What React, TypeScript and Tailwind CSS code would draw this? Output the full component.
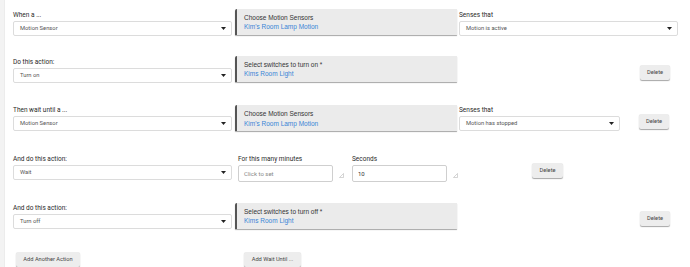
import React from "react";

const roboto = { fontFamily: "Roboto, 'Liberation Sans', sans-serif" };
const arial = { fontFamily: "'Liberation Sans', Arial, sans-serif" };

function Caret() {
  return (
    <svg width="5" height="3" viewBox="0 0 5 3" className="shrink-0">
      <path d="M0 0 L5 0 L2.5 3 Z" fill="#222" />
    </svg>
  );
}

function Select({ value, width = "w-[219px]" }: { value: string; width?: string }) {
  return (
    <div
      className={`${width} h-[15px] bg-white border border-[#dcdcdc] rounded-[2px] flex items-center justify-between pl-[6px] pr-[5px] text-[5.8px] text-[#555]`}
    >
      <span>{value}</span>
      <Caret />
    </div>
  );
}

function Field({ label, value, width }: { label: string; value: string; width?: string }) {
  return (
    <div className="flex flex-col">
      <span className="text-[6.5px] leading-[8px] text-[#2a2a2a] mb-[2px]">{label}</span>
      <Select value={value} width={width} />
    </div>
  );
}

function DeviceBox({ title, device }: { title: string; device: string }) {
  return (
    <div
      style={arial}
      className="w-[222px] h-[26px] bg-[#ebebeb] border-l-2 border-[#555] rounded-tl-[2px] shadow-[0_1px_1px_rgba(0,0,0,0.35)] pl-[7px] pt-[4px] flex flex-col text-[6.5px] leading-[9.5px]"
    >
      <span className="text-[#333]">{title}</span>
      <span className="text-[#3a85d6]">{device}</span>
    </div>
  );
}

function Btn({ children, className = "" }: { children: React.ReactNode; className?: string }) {
  return (
    <div
      className={`h-[15px] bg-[#ededed] rounded-[2px] shadow-[0_1px_1px_rgba(0,0,0,0.35)] flex items-center justify-center text-[5.7px] text-[#444] ${className}`}
    >
      {children}
    </div>
  );
}

function Resize() {
  return (
    <svg width="5" height="5" viewBox="0 0 5 5" className="shrink-0">
      <path d="M0.5 4.5 L4.5 0.5 M0.5 4.5 L4.5 4.5 M4.5 0.5 L4.5 4.5" stroke="#aaa" strokeWidth="0.5" fill="none" />
    </svg>
  );
}

function NumInput({ label, value, muted }: { label: string; value: string; muted?: boolean }) {
  return (
    <div className="flex flex-col">
      <span className="text-[6.5px] leading-[8px] text-[#2a2a2a] mb-[2px]">{label}</span>
      <div className="flex items-end">
        <div
          className={`w-[95px] h-[17px] border border-[#cfcfcf] rounded-[2px] bg-white flex items-center pl-[5px] text-[6px] ${muted ? "text-[#888]" : "text-[#333]"}`}
        >
          {value}
        </div>
        <div className="ml-[6px] mb-[4px]">
          <Resize />
        </div>
      </div>
    </div>
  );
}

export default function App() {
  return (
    <div style={roboto} className="w-[690px] h-[267px] bg-white flex overflow-hidden">
      <div className="w-[5px] h-full bg-[#f3f3f3] border-r border-[#ececec]" />
      <div className="flex-1 pl-[8px] flex flex-col">
        <div className="h-[36px] flex items-end">
          <Field label="When a ..." value="Motion Sensor" />
          <div className="ml-[3px] mb-[1px]">
            <DeviceBox title="Choose Motion Sensors" device="Kim's Room Lamp Motion" />
          </div>
          <div className="ml-[2px]">
            <Field label="Senses that" value="Motion is active" />
          </div>
        </div>

        <div className="h-[48px] flex items-end">
          <Field label="Do this action:" value="Turn on" />
          <div className="ml-[3px] mb-[1px]">
            <DeviceBox title="Select switches to turn on *" device="Kims Room Light" />
          </div>
          <Btn className="w-[30px] ml-[183px] mb-[3px]">Delete</Btn>
        </div>

        <div className="h-[49px] flex items-end">
          <Field label="Then wait until a ..." value="Motion Sensor" />
          <div className="ml-[3px]">
            <DeviceBox title="Choose Motion Sensors" device="Kim's Room Lamp Motion" />
          </div>
          <div className="ml-[2px]">
            <Field label="Senses that" value="Motion has stopped" width="w-[161px]" />
          </div>
          <Btn className="w-[30px] ml-[19px] mb-[2px]">Delete</Btn>
        </div>

        <div className="h-[51px] flex items-end">
          <div className="mb-[2px]">
            <Field label="And do this action:" value="Wait" />
          </div>
          <div className="ml-[6px] flex items-end">
            <NumInput label="For this many minutes" value="Click to set" muted />
            <div className="ml-[8px]">
              <NumInput label="Seconds" value="10" />
            </div>
          </div>
          <Btn className="w-[31px] ml-[74px] mb-[4px]">Delete</Btn>
        </div>

        <div className="h-[48px] flex items-end">
          <Field label="And do this action:" value="Turn off" />
          <div className="ml-[3px]">
            <DeviceBox title="Select switches to turn off *" device="Kims Room Light" />
          </div>
          <Btn className="w-[30px] ml-[183px] mb-[3px]">Delete</Btn>
        </div>

        <div className="mt-[23px] flex">
          <Btn className="w-[64px] ml-[3px]">Add Another Action</Btn>
          <Btn className="w-[57px] ml-[164px]">Add Wait Until ...</Btn>
        </div>
      </div>
    </div>
  );
}
